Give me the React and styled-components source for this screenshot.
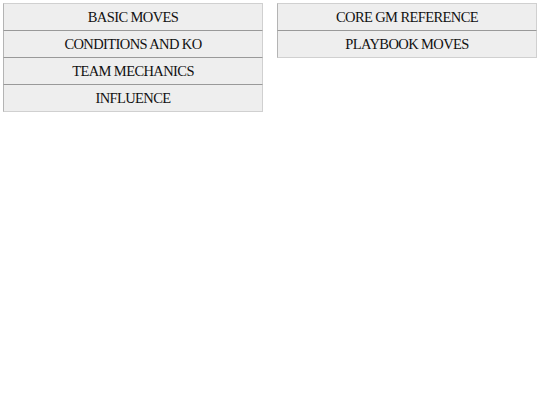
import React from "react";
import styled, { createGlobalStyle } from "styled-components";

const leftMenu = ["BASIC MOVES", "CONDITIONS AND KO", "TEAM MECHANICS", "INFLUENCE"];
const rightMenu = ["CORE GM REFERENCE", "PLAYBOOK MOVES"];

const GlobalStyle = createGlobalStyle`
  html, body {
    margin: 0;
    background: #ffffff;
  }
`;

function App() {
    return (
        <>
            <GlobalStyle />
            <MenuGrid>
                <Column>
                    {leftMenu.map((title, i) => (
                        <MenuButton key={title} $first={i === 0}>
                            {title}
                        </MenuButton>
                    ))}
                </Column>
                <Column>
                    {rightMenu.map((title, i) => (
                        <MenuButton key={title} $first={i === 0}>
                            {title}
                        </MenuButton>
                    ))}
                </Column>
            </MenuGrid>
        </>
    );
}

const MenuGrid = styled.div`
  display: grid;
  grid-template-columns: 260px 260px;
  column-gap: 14px;
  align-items: start;
  padding: 3px;
`;

const Column = styled.div`
  display: flex;
  flex-direction: column;
`;

const MenuButton = styled.div`
  box-sizing: border-box;
  height: 28px;
  display: flex;
  align-items: center;
  justify-content: center;
  background: #eeeeee;
  border: 1px solid #d0d0d0;
  border-left-color: #b4b4b4;
  border-top-color: ${(p) => (p.$first ? "#d0d0d0" : "#999999")};
  margin-top: ${(p) => (p.$first ? "0" : "-1px")};
  font-family: "Liberation Serif", "DejaVu Serif", serif;
  font-size: 14.5px;
  letter-spacing: -0.6px;
  color: #111111;
  cursor: pointer;
`;

export default App;
